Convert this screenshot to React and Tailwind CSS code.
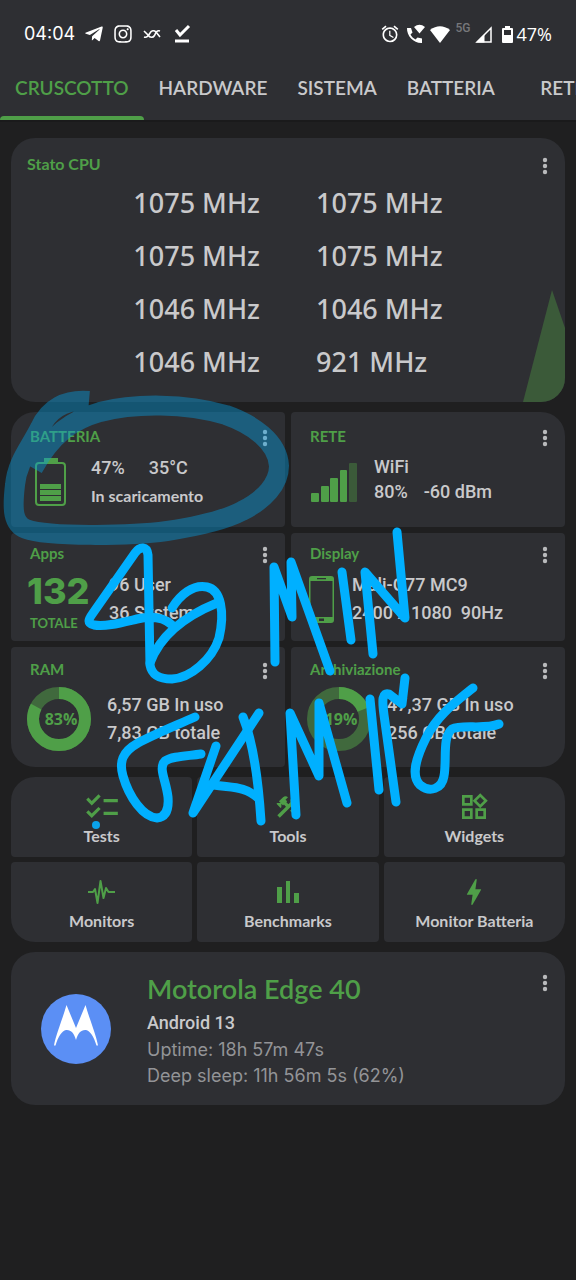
import { useState } from "react";
import { FaTelegramPlane, FaInstagram } from "react-icons/fa";
import { MdAlarm, MdChecklist, MdOutlineWidgets, MdBolt } from "react-icons/md";

const tabs = ["CRUSCOTTO", "HARDWARE", "SISTEMA", "BATTERIA", "RETE"];

const cores = [
  "1075 MHz", "1075 MHz",
  "1075 MHz", "1075 MHz",
  "1046 MHz", "1046 MHz",
  "1046 MHz", "921 MHz",
];

const shortcuts = [
  { label: "Tests", icon: <MdChecklist size={38} />, corner: "rounded-tl-3xl" },
  { label: "Tools", icon: <ToolsIcon />, corner: "" },
  { label: "Widgets", icon: <MdOutlineWidgets size={32} />, corner: "rounded-tr-3xl" },
  { label: "Monitors", icon: <PulseIcon />, corner: "rounded-bl-3xl" },
  { label: "Benchmarks", icon: <BarsIcon />, corner: "" },
  { label: "Monitor Batteria", icon: <MdBolt size={34} />, corner: "rounded-br-3xl" },
];

function App() {
  const [active, setActive] = useState("CRUSCOTTO");

  return (
    <div className="relative min-h-screen overflow-hidden bg-[#1f1f20] font-[Lato,sans-serif] text-[#c9c9cb]">
      <header className="bg-[#2e2f33] border-b-2 border-[#1a1a1b]">
        <StatusBar />
        <nav className="flex h-16 overflow-hidden">
          {tabs.map((tab) => (
            <button
              key={tab}
              onClick={() => setActive(tab)}
              className={`relative shrink-0 px-[15px] text-[19px] font-semibold last:min-w-[106px] ${
                active === tab ? "text-[#4f9f48]" : ""
              }`}
            >
              {tab}
              {active === tab && (
                <span className="absolute inset-x-0 bottom-0 h-1 rounded-t bg-[#4f9f48]" />
              )}
            </button>
          ))}
        </nav>
      </header>

      <main className="flex flex-col gap-[10px] px-[11px] pt-4 pb-8">
        <section className="relative overflow-hidden rounded-3xl bg-[#2e2f33] pt-[14px] pb-[14px]">
          <CardHeader title="Stato CPU" className="pl-4 text-base" />
          <div className="grid grid-cols-[auto_auto] justify-center gap-x-14 font-['Noto_Sans',sans-serif] text-[27px] leading-[53px] font-medium">
            {cores.map((c, i) => (
              <span key={i}>{c}</span>
            ))}
          </div>
          <svg className="absolute right-0 bottom-0" width="42" height="112" viewBox="0 0 42 112">
            <path d="M0 112 L29 0 L42 38 V112 Z" fill="#3b5a39" />
          </svg>
        </section>

        <div className="grid grid-cols-2 gap-1.5">
          <section className="rounded rounded-tl-3xl bg-[#2e2f33] pt-3 pb-[17px]">
            <CardHeader title="BATTERIA" />
            <div className="mt-1.5 flex items-start">
              <div className="flex w-20 justify-center self-center">
                <BatteryIcon />
              </div>
              <div className="text-lg leading-7">
                <p className="flex gap-6 font-[Roboto,sans-serif] font-medium">
                  <span>47%</span>
                  <span>35°C</span>
                </p>
                <p className="text-base leading-7 font-bold">In scaricamento</p>
              </div>
            </div>
          </section>

          <section className="rounded rounded-tr-3xl bg-[#2e2f33] pt-3 pb-[17px]">
            <CardHeader title="RETE" />
            <div className="mt-1.5 flex h-14 items-start">
              <div className="w-[83px] self-center pl-5">
                <SignalIcon />
              </div>
              <div className="font-[Roboto,sans-serif] text-lg leading-[25px] font-medium">
                <p>WiFi</p>
                <p className="flex gap-4">
                  <span>80%</span>
                  <span>-60 dBm</span>
                </p>
              </div>
            </div>
          </section>

          <section className="rounded bg-[#2e2f33] pt-2 pb-1.5">
            <CardHeader title="Apps" />
            <div className="mt-1.5 flex items-start">
              <div className="w-[98px] pl-4 text-[#4f9f48]">
                <p className="font-[Inter,sans-serif] text-4xl leading-10 font-extrabold">132</p>
                <p className="pl-[3px] text-[13px] leading-6 font-bold">TOTALE</p>
              </div>
              <Lines first="96 User" second="36 System" />
            </div>
          </section>

          <section className="rounded bg-[#2e2f33] pt-2 pb-1.5">
            <CardHeader title="Display" />
            <div className="mt-1.5 flex items-start">
              <div className="flex h-14 w-[61px] items-center pl-[18px]">
                <PhoneIcon />
              </div>
              <Lines first="Mali-G77 MC9" second={"2400 x 1080\u00a0 90Hz"} />
            </div>
          </section>

          <section className="rounded rounded-bl-3xl bg-[#2e2f33] pt-[10px] pb-4">
            <CardHeader title="RAM" />
            <div className="mt-1.5 flex items-center">
              <div className="w-24 pl-4">
                <Donut percent={83} />
              </div>
              <Lines first="6,57 GB In uso" second="7,83 GB totale" />
            </div>
          </section>

          <section className="rounded rounded-br-3xl bg-[#2e2f33] pt-[10px] pb-4">
            <CardHeader title="Archiviazione" />
            <div className="mt-1.5 flex items-center">
              <div className="w-24 pl-4">
                <Donut percent={19} />
              </div>
              <Lines first="47,37 GB In uso" second="256 GB totale" />
            </div>
          </section>
        </div>

        <div className="grid grid-cols-3 gap-[5px]">
          {shortcuts.map((s) => (
            <button
              key={s.label}
              className={`flex flex-col items-center rounded bg-[#2e2f33] pt-[14px] pb-2 ${s.corner}`}
            >
              <span className="flex h-8 items-center text-[#4f9f48]">{s.icon}</span>
              <span className="text-base leading-[26px] font-bold">{s.label}</span>
            </button>
          ))}
        </div>

        <section className="flex items-start rounded-3xl bg-[#2e2f33] pt-[17px] pb-4">
          <div className="w-[136px] self-center pl-[30px]">
            <MotorolaLogo />
          </div>
          <div className="flex-1">
            <h2 className="text-[27px] leading-10 font-semibold text-[#4f9f48]">Motorola Edge 40</h2>
            <p className="font-[Roboto,sans-serif] text-lg leading-7 font-medium">Android 13</p>
            <p className="font-[Inter,sans-serif] text-lg leading-[26px] text-[#939497]">Uptime: 18h 57m 47s</p>
            <p className="font-[Inter,sans-serif] text-lg leading-[26px] text-[#939497]">
              Deep sleep: 11h 56m 5s (62%)
            </p>
          </div>
          <Kebab />
        </section>
      </main>

      <Scribble />
    </div>
  );
}

function StatusBar() {
  return (
    <div className="flex h-14 items-center justify-between px-6 pt-3 font-['Open_Sans',sans-serif] text-lg text-white">
      <div className="flex items-center gap-[9px]">
        <span className="font-[Inter,sans-serif] text-lg">04:04</span>
        <FaTelegramPlane size={20} />
        <FaInstagram size={20} />
        <svg width="20" height="12" viewBox="0 0 18 12" fill="none" stroke="currentColor" strokeWidth="1.6">
          <path d="M1 9 C4 10 5 8 7 5 C8.500 2.500 11 2 13 4 L17 9" />
          <path d="M1 3 L5 7 C7 10 10 10 11.500 7.500 C13 4 14 2 17 3" />
        </svg>
        <svg width="22" height="20" viewBox="0 0 22 20" fill="none" stroke="currentColor" strokeWidth="3">
          <path d="M5 6 L9 11 L18 2" />
          <path d="M4 17 H18" />
        </svg>
      </div>
      <div className="flex items-center">
        <MdAlarm size={20} />
        <svg className="ml-1.5" width="20" height="20" viewBox="0 0 20 20" fill="currentColor">
          <path d="M1 4 H5 L6.500 8.500 L4.500 10.500 C5.500 12.500 7.500 14.500 9.500 15.500 L11.500 13.500 L16 14.500 V19 C8 19.500 .5 12 1 4 Z" />
          <path d="M8 3 Q13.500 -1.500 19 3 L13.500 9.500 Z" />
        </svg>
        <svg className="ml-1" width="20" height="17" viewBox="0 0 20 17" fill="currentColor">
          <path d="M0 4 Q10 -3.500 20 4 L10 17 Z" />
        </svg>
        <span className="ml-1.5 self-start font-[Roboto,sans-serif] text-xs font-medium text-[#77787b]">5G</span>
        <svg className="ml-1" width="17" height="17" viewBox="0 0 17 17">
          <path d="M2 16 L16 2 V16 Z" fill="none" stroke="currentColor" strokeWidth="1.5" />
          <path d="M1 16.500 L9.500 8 V16.500 Z" fill="currentColor" />
        </svg>
        <svg className="ml-2.5" width="11" height="17" viewBox="0 0 11 17">
          <path d="M3 0 H8 V2 H10 Q11 2 11 3 V16 Q11 17 10 17 H1 Q0 17 0 16 V3 Q0 2 1 2 H3 Z" fill="currentColor" />
          <path d="M2 4 H9 V9 H2 Z" fill="#2e2f33" />
        </svg>
        <span className="ml-1">47%</span>
      </div>
    </div>
  );
}

function CardHeader({ title, className = "pl-[19px] text-[15px]" }) {
  return (
    <div className={`flex h-6 items-start justify-between ${className}`}>
      <h3 className="leading-6 font-bold text-[#4f9f48]">{title}</h3>
      <Kebab />
    </div>
  );
}

function Kebab() {
  return (
    <button aria-label="Altro" className="mt-1 mr-3 flex h-5 w-4 items-center justify-center text-[#b9babc]">
      <svg width="6" height="20" viewBox="0 0 6 20" fill="currentColor">
        <circle cx="3" cy="4" r="2.200" />
        <circle cx="3" cy="10" r="2.200" />
        <circle cx="3" cy="16" r="2.200" />
      </svg>
    </button>
  );
}

function Lines({ first, second }) {
  return (
    <div className="font-[Roboto,sans-serif] text-lg leading-7 font-medium whitespace-nowrap">
      <p>{first}</p>
      <p>{second}</p>
    </div>
  );
}

function Donut({ percent }) {
  return (
    <div className="relative size-16">
      <svg className="-rotate-90" width="64" height="64" viewBox="0 0 64 64" fill="none" strokeWidth="12">
        <circle cx="32" cy="32" r="26" stroke="#40693d" />
        <circle cx="32" cy="32" r="26" stroke="#4f9f48" pathLength="100" strokeDasharray={`${percent} 100`} />
      </svg>
      <span className="absolute inset-0 flex items-center justify-center pl-1 font-['Open_Sans',sans-serif] text-base font-bold text-[#4f9f48]">
        {percent}%
      </span>
    </div>
  );
}

function BatteryIcon() {
  return (
    <svg width="32" height="48" viewBox="0 0 32 48">
      <path d="M9 0 H23 V4 H9 Z" fill="#4f9f48" />
      <rect x="1" y="5" width="29" height="42" rx="3" fill="none" stroke="#4f9f48" strokeWidth="2" />
      <path d="M5 26 H26 V31 H5 Z M5 32 H26 V37 H5 Z M5 38 H26 V43 H5 Z" fill="#4f9f48" />
    </svg>
  );
}

function SignalIcon() {
  return (
    <svg width="47" height="40" viewBox="0 0 47 40" fill="#4f9f48">
      <rect x="0" y="31" width="8" height="9" rx="1" />
      <rect x="10" y="24" width="8" height="16" rx="1" />
      <rect x="19" y="16" width="8" height="24" rx="1" />
      <rect x="29" y="8" width="7" height="32" rx="1" />
      <rect x="38" y="1" width="8" height="39" rx="1" fill="#3b5a39" />
    </svg>
  );
}

function PhoneIcon() {
  return (
    <svg width="25" height="47" viewBox="0 0 25 47">
      <rect width="25" height="47" rx="3" fill="#4f9f48" />
      <path d="M1.500 5 H23.500 V41 H1.500 Z" fill="#2e2f33" />
      <path d="M8 2 H17 V3.200 H8 Z M10 42.500 H15 V45 H10 Z" fill="#2e2f33" />
    </svg>
  );
}

function ToolsIcon() {
  return (
    <svg width="28" height="28" viewBox="0 0 24 24" fill="currentColor">
      <path d="M13.780 15.300L19.780 21.300L21.890 19.140L15.890 13.140L13.780 15.300M17.500 10.100C17.110 10.100 16.690 10.050 16.360 9.910L4.970 21.250L2.860 19.140L10.270 11.740L8.500 9.960L7.780 10.660L6.330 9.250V12.110L5.630 12.810L2.110 9.250L2.810 8.550H5.620L4.220 7.140L7.780 3.580C8.950 2.410 10.830 2.410 12 3.580L9.890 5.740L11.300 7.140L10.590 7.850L12.380 9.630L14.200 7.750C14.060 7.420 14 7 14 6.630C14 4.660 15.560 3.110 17.500 3.110C18.090 3.110 18.610 3.250 19.080 3.530L16.410 6.200L17.910 7.700L20.580 5.030C20.860 5.500 21 6 21 6.630C21 8.550 19.450 10.100 17.500 10.100Z" />
    </svg>
  );
}

function PulseIcon() {
  return (
    <svg width="27" height="26" viewBox="0 0 27 26" fill="none" stroke="currentColor" strokeWidth="2" strokeLinejoin="round">
      <path d="M0 13 H5 L7 10 L9.500 24 L12.500 2 L15.500 19 L18 9 L20.500 13 H27" />
    </svg>
  );
}

function BarsIcon() {
  return (
    <svg width="24" height="24" viewBox="0 0 24 24" fill="currentColor">
      <path d="M1 7 H6 V23 H1 Z M10 1 H14 V23 H10 Z M18 13 H23 V23 H18 Z" />
    </svg>
  );
}

function MotorolaLogo() {
  return (
    <svg width="70" height="70" viewBox="0 0 70 70">
      <circle cx="35" cy="35" r="35" fill="#5b8ff5" />
      <path
        d="M25.500 11 L35 34 L44.500 11 C48 24 55 40 57 51.500 H55.500 C53 43 49 36.500 45 36 C40 35.500 37 39 35 46 C33 39 30 35.500 25 36 C21 36.500 17 43 14.500 51.500 H13 C15 40 22 24 25.500 11 Z"
        fill="#fff"
      />
    </svg>
  );
}

// hand drawn notes on top of the dashboard
function Scribble() {
  return (
    <svg
      className="pointer-events-none absolute top-0 left-0"
      width="576"
      height="1280"
      viewBox="0 0 576 1280"
      fill="none"
      strokeLinecap="round"
      strokeLinejoin="round"
    >
      <path
        d="M89 401 C66 399 49 408 40 428 C30 448 17 462 15 485 C12 510 13 524 26 529 C48 537 130 536 167 531 C200 526 225 520 242 511 C264 500 279 484 279 466 C278 442 252 424 226 415 C185 403 135 403 100 412 C72 420 52 434 33 468"
        stroke="#05a0e4"
        strokeOpacity=".42"
        strokeWidth="20"
        strokeLinecap="butt"
      />
      <g stroke="#00b0ff" strokeWidth="9">
        <path d="M172 625 C163 617 150 616 137 619 C120 623 105 627 94 625 C87 623 88 620 93 613 L135 553 C140 546 147 546 148 555 L150 665 C152 676 160 679 172 679 C190 678 212 660 219 638 C225 612 221 590 207 587 C193 584 180 595 172 608" />
        <path d="M217 603 C195 612 162 630 150 663" />
        <path d="M275 662 L274 567 L292 617 L291 562 L330 671" />
        <path d="M342 572 L351 640" />
        <path d="M373 654 L365 572 L405 618 L397 532" />
        <path d="M195 717 C175 726 155 734 138 743 C122 752 119 762 123 776 C129 797 143 817 157 818 C166 817 169 809 168 797 C166 780 158 768 165 761 C172 756 188 756 201 754" />
        <path d="M216 746 L193 813 L259 713" />
        <path d="M243 717 C253 742 258 775 261 821" />
        <path d="M214 785 C232 788 245 786 258 798" />
        <path d="M296 815 L290 713 L319 776 L319 703 L347 803" />
        <path d="M370 699 L379 790" />
        <path d="M396 802 L384 715 C382 700 382 692 389 694 L402 704 L405 678" />
        <path d="M473 688 C453 704 437 716 426 738 C415 760 411 776 420 785 C430 793 442 789 444 776 C447 760 442 737 452 729 C462 724 485 730 499 724" />
      </g>
      <circle cx="96" cy="825" r="4" fill="#0aa2ea" />
    </svg>
  );
}

export default App;
